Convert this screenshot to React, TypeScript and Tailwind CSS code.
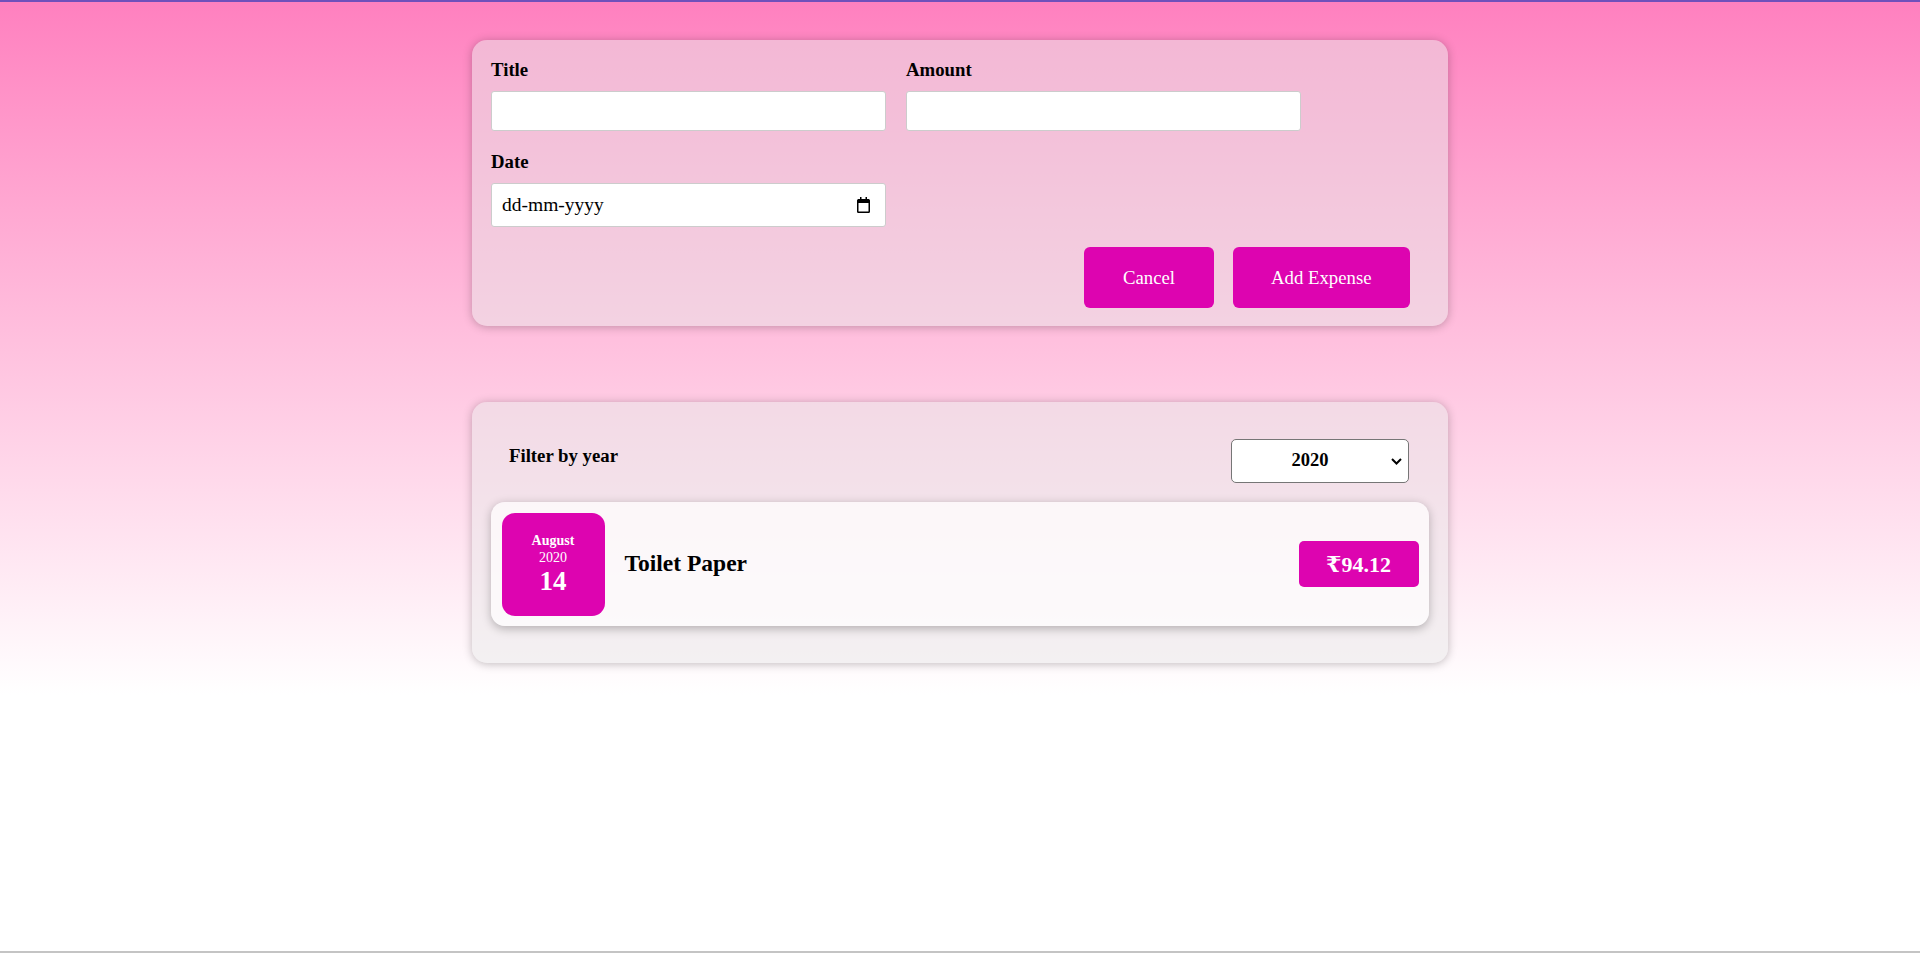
import { useState } from "react";

type Expense = {
  id: string;
  title: string;
  amount: number;
  date: Date;
};

const EXPENSES: Expense[] = [
  { id: "e1", title: "Toilet Paper", amount: 94.12, date: new Date(2020, 7, 14) },
];

const YEARS = ["2019", "2020", "2021", "2022"];

function CalendarIcon() {
  return (
    <svg width="15" height="16" viewBox="0 0 15 16" className="shrink-0">
      <path
        fillRule="evenodd"
        d="M4 0h1.5v2h4V0H11v2h1.3c.9 0 1.7.7 1.7 1.6v10.8c0 .9-.8 1.6-1.7 1.6H2.7C1.8 16 1 15.3 1 14.4V3.6C1 2.7 1.8 2 2.7 2H4V0zM2.5 6v8.4h10V6h-10z"
        fill="#000"
      />
    </svg>
  );
}

function ExpenseForm() {
  return (
    <form className="mx-auto w-[976px] rounded-[15px] bg-[#e8e8e8]/50 px-[19px] pb-[18px] pt-[19px] shadow-[0_1px_10px_rgba(0,0,0,0.25)]">
      <div className="mb-[20px] flex w-[830px] flex-wrap gap-[20px]">
        <div className="w-[395px]">
          <label className="mb-[10px] block text-[18.75px] font-bold leading-[22px] text-black">
            Title
          </label>
          <input
            type="text"
            className="h-[40px] w-[395px] rounded-[3px] border border-[#cccccc] bg-white px-[10px] text-[18.75px] outline-none"
          />
        </div>
        <div className="w-[395px]">
          <label className="mb-[10px] block text-[18.75px] font-bold leading-[22px] text-black">
            Amount
          </label>
          <input
            type="number"
            className="h-[40px] w-[395px] rounded-[3px] border border-[#cccccc] bg-white px-[10px] text-[18.75px] outline-none"
          />
        </div>
        <div className="w-[395px]">
          <label className="mb-[10px] block text-[18.75px] font-bold leading-[22px] text-black">
            Date
          </label>
          <div className="flex h-[44px] w-[395px] items-center justify-between rounded-[3px] border border-[#cccccc] bg-white pl-[10px] pr-[14px]">
            <span className="text-[19.5px] text-black">dd-mm-yyyy</span>
            <CalendarIcon />
          </div>
        </div>
      </div>

      <div className="flex justify-end gap-[19px] pr-[19px]">
        <button
          type="button"
          className="h-[61px] rounded-[6px] bg-[#dd04b0] px-[38.5px] text-[18.75px] leading-[21px] text-white"
        >
          Cancel
        </button>
        <button
          type="submit"
          className="h-[61px] rounded-[6px] bg-[#dd04b0] px-[38.5px] text-[18.75px] leading-[21px] text-white"
        >
          Add Expense
        </button>
      </div>
    </form>
  );
}

function ExpenseDate({ date }: { date: Date }) {
  const month = date.toLocaleString("en-US", { month: "long" });
  const year = date.getFullYear();
  const day = date.getDate();

  return (
    <div className="flex h-[103px] w-[103px] shrink-0 flex-col items-center justify-center rounded-[13px] bg-[#dd04b0] text-white">
      <div className="text-[14px] font-bold leading-[17px]">{month}</div>
      <div className="text-[14px] leading-[17px]">{year}</div>
      <div className="text-[27px] font-bold leading-[30px]">{day}</div>
    </div>
  );
}

function ExpenseItem({ expense }: { expense: Expense }) {
  return (
    <div className="flex items-center rounded-[14px] bg-white/70 p-[10.5px] shadow-[0_2.5px_10px_rgba(0,0,0,0.25)]">
      <ExpenseDate date={expense.date} />
      <h2 className="ml-[20px] flex-1 text-[23.5px] font-bold text-black">{expense.title}</h2>
      <div className="flex h-[46px] w-[120px] items-center justify-center rounded-[5px] bg-[#dd04b0] text-[22px] font-bold text-white">
        ₹{expense.amount.toFixed(2)}
      </div>
    </div>
  );
}

function ExpensesFilter({ year, onChange }: { year: string; onChange: (y: string) => void }) {
  return (
    <div className="flex h-[44px] items-center justify-between pl-[18px] pr-[20px]">
      <label className="mb-[10px] text-[18.75px] font-bold leading-[22px] text-black">Filter by year</label>
      <div className="relative h-[44px] w-[178px]">
        <select
          value={year}
          onChange={(e) => onChange(e.target.value)}
          className="h-full w-full appearance-none rounded-[5px] border border-[#767676] bg-white pr-[20px] text-center text-[18.5px] font-bold text-black outline-none [text-align-last:center]"
        >
          {YEARS.map((y) => (
            <option key={y} value={y}>
              {y}
            </option>
          ))}
        </select>
        <svg
          width="11"
          height="7"
          viewBox="0 0 11 7"
          className="pointer-events-none absolute right-[7px] top-[19px]"
        >
          <path d="M1 1l4.5 4.5L10 1" fill="none" stroke="#000" strokeWidth="2" />
        </svg>
      </div>
    </div>
  );
}

export default function App() {
  const [year, setYear] = useState("2020");
  const filtered = EXPENSES.filter((e) => e.date.getFullYear().toString() === year);

  return (
    <div className="flex min-h-screen flex-col border-b-2 border-t-2 border-b-[#c4c4c4] border-t-[#7150bb] bg-white font-['Liberation_Serif','DejaVu_Serif',serif]">
      <div className="bg-gradient-to-b from-[#ff80bf] to-white pb-[32px] pt-[38px]">
        <ExpenseForm />

        {/* Expenses list */}
        <div className="mx-auto mt-[76px] w-[976px] rounded-[15px] bg-[#e8e8e8]/50 px-[19px] pb-[37px] pt-[37px] shadow-[0_1px_10px_rgba(0,0,0,0.25)]">
          <ExpensesFilter year={year} onChange={setYear} />
          <div className="mt-[19px] flex flex-col gap-[20px]">
            {filtered.map((e) => (
              <ExpenseItem key={e.id} expense={e} />
            ))}
          </div>
        </div>
      </div>
      <div className="flex-1" />
    </div>
  );
}
